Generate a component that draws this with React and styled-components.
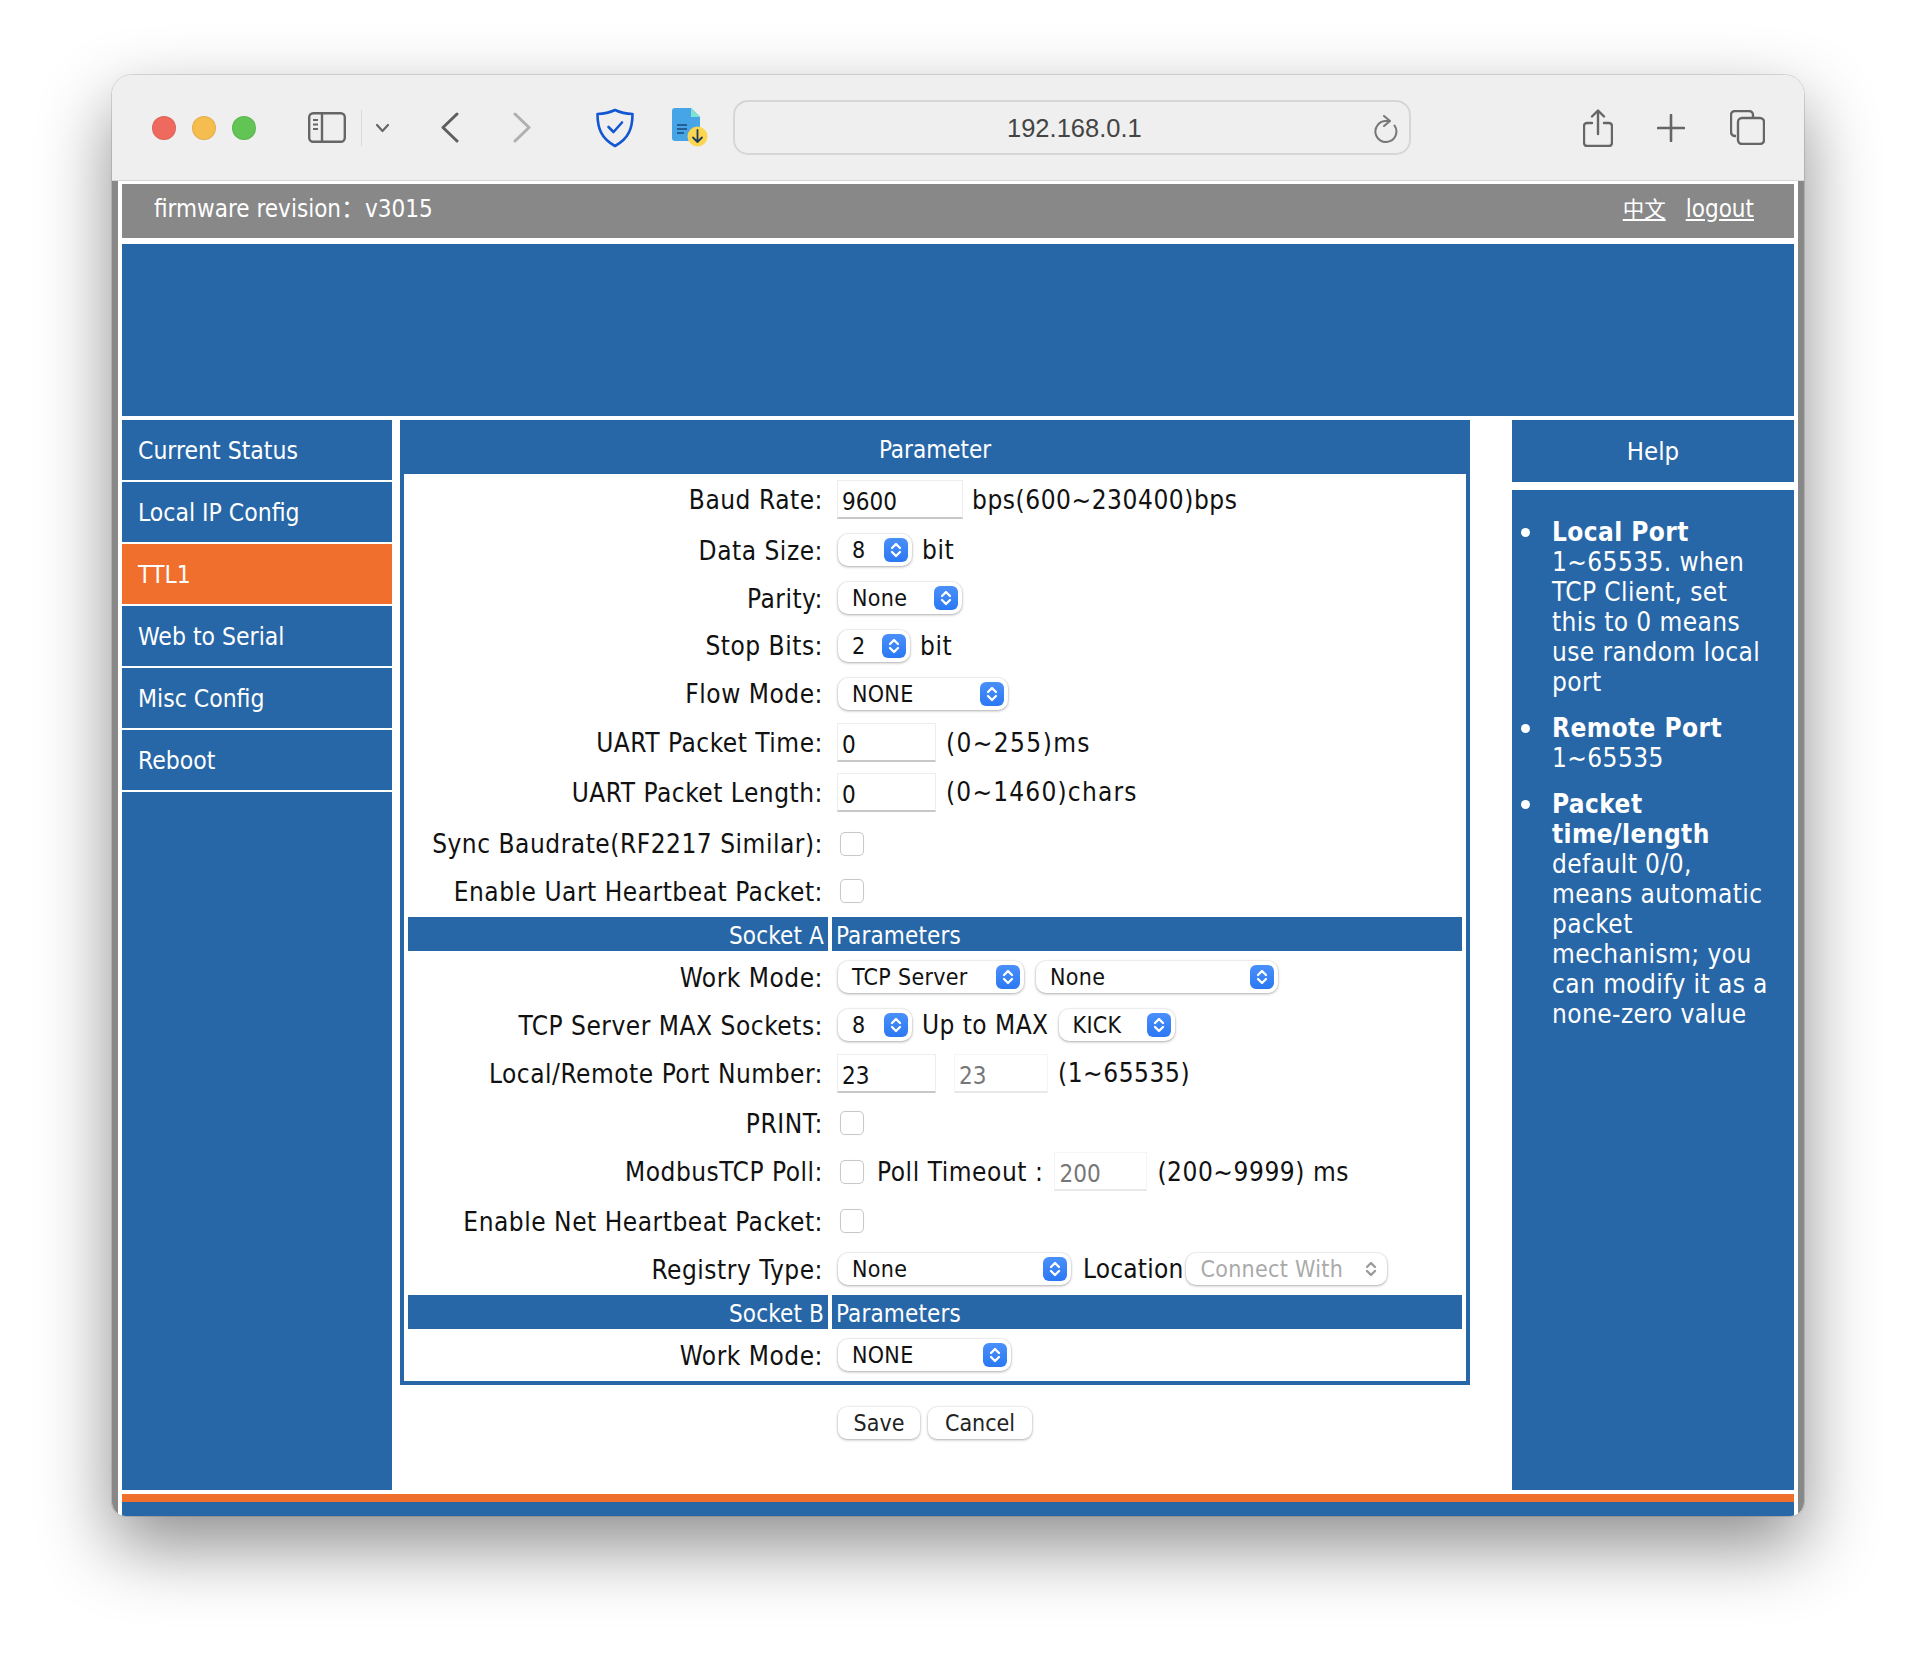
import React from 'react';
import styled, { createGlobalStyle } from 'styled-components';

const BLUE = '#2767a7';
const FONT = '"DejaVu Sans Condensed", "DejaVu Sans", "Noto Sans CJK SC", sans-serif';

const GlobalStyle = createGlobalStyle`
  html, body {
    margin: 0;
    padding: 0;
    background: #fff;
  }
  body {
    font-family: ${FONT};
    font-stretch: condensed;
  }
`;

const Page = styled.div`
  width: 1916px;
  height: 1664px;
  padding: 75px 112px 0;
  box-sizing: border-box;
  overflow: hidden;
`;

const Window = styled.div`
  height: 1441px;
  border-radius: 20px 20px 14px 14px;
  overflow: hidden;
  display: flex;
  flex-direction: column;
  box-shadow: 0 0 0 1px rgba(0, 0, 0, 0.12), 0 30px 72px rgba(0, 0, 0, 0.45);
`;

const Toolbar = styled.div`
  height: 106px;
  flex: none;
  background: #efefef;
  border-bottom: 1px solid #d6d6d6;
  box-sizing: border-box;
  display: flex;
  align-items: center;
  padding-left: 40px;
`;

const Lights = styled.div`
  display: flex;
  gap: 16px;
  margin-right: 52px;
`;

const Light = styled.span`
  width: 24px;
  height: 24px;
  border-radius: 50%;
  background: ${(p) => p.$color};
  box-shadow: inset 0 0 0 1px rgba(0, 0, 0, 0.08);
`;

const ToolIcon = styled.svg`
  flex: none;
  display: block;
  margin-left: ${(p) => p.$ml || 0}px;
`;

const Divider = styled.span`
  width: 1px;
  height: 36px;
  background: #d8d8d8;
  margin-left: 15px;
`;

const UrlBar = styled.div`
  width: 678px;
  height: 55px;
  margin-left: 25px;
  box-sizing: border-box;
  border: 2px solid #d6d6d6;
  border-radius: 15px;
  display: flex;
  align-items: center;
  padding: 2px 11px 0 272px;
  justify-content: space-between;
  font-family: "Liberation Sans", sans-serif;
  font-stretch: normal;
  font-size: 25.5px;
  color: #444;
`;

const Content = styled.div`
  flex: 1;
  min-height: 0;
  background: #fff;
  border-left: 6px solid #888;
  border-right: 6px solid #888;
  padding: 3px 4px 0;
  display: flex;
  flex-direction: column;
`;

const TopBar = styled.div`
  height: 54px;
  flex: none;
  box-sizing: border-box;
  background: #888;
  color: #fff;
  font-size: 24px;
  line-height: 30px;
  display: flex;
  align-items: center;
  justify-content: space-between;
  padding: 0 40px 4px 32px;
`;

const TopLinks = styled.div`
  display: flex;
  align-items: baseline;
  gap: 20px;
`;

const TopLink = styled.a`
  color: #fff;
  font-size: ${(p) => p.$size || 24}px;
  text-decoration: underline;
  cursor: pointer;
`;

const Banner = styled.div`
  height: 172px;
  flex: none;
  margin-top: 6px;
  background: ${BLUE};
`;

const Columns = styled.div`
  height: 1070px;
  flex: none;
  margin-top: 4px;
  display: flex;
`;

const Sidebar = styled.nav`
  width: 270px;
  flex: none;
  background: ${BLUE};
  display: flex;
  flex-direction: column;
`;

const NavItem = styled.a`
  height: 60px;
  flex: none;
  box-sizing: content-box;
  border-bottom: 2px solid #fff;
  background: ${(p) => (p.$active ? '#f06f2d' : BLUE)};
  color: #fff;
  font-size: 24.5px;
  display: flex;
  align-items: center;
  padding-left: 16px;
`;

const Main = styled.main`
  width: 1070px;
  flex: none;
  margin-left: 8px;
`;

const Panel = styled.div`
  height: 965px;
  box-sizing: border-box;
  border: 4px solid ${BLUE};
  border-top: 0;
  padding: 0 4px;
`;

const PanelTitle = styled.div`
  height: 54px;
  margin: 0 -8px;
  box-sizing: border-box;
  padding-top: 6px;
  background: ${BLUE};
  color: #fff;
  font-size: 24px;
  display: flex;
  align-items: center;
  justify-content: center;
`;

const Row = styled.div`
  height: ${(p) => p.$h}px;
  display: grid;
  grid-template-columns: 420px 630px;
  column-gap: 4px;
  align-items: center;
`;

const Label = styled.div`
  text-align: right;
  padding: 1px 5px 0 0;
  font-size: 26px;
  letter-spacing: 0.52px;
  color: #111;
  white-space: nowrap;
`;

const Controls = styled.div`
  display: flex;
  align-items: center;
  padding-left: 6px;
`;

const Band = styled.div`
  height: 34px;
  margin-top: ${(p) => p.$mt}px;
  display: grid;
  grid-template-columns: 420px 630px;
  column-gap: 4px;
`;

const BandCell = styled.div`
  background: ${BLUE};
  color: #fff;
  font-size: 24px;
  letter-spacing: 0.15px;
  display: flex;
  align-items: center;
  justify-content: ${(p) => (p.$right ? 'flex-end' : 'flex-start')};
  padding: 3px 4px 0;
`;

const TextInput = styled.input`
  width: ${(p) => p.$w}px;
  height: 39px;
  flex: none;
  box-sizing: border-box;
  margin: 0 0 0 ${(p) => (p.$ml === undefined ? -1 : p.$ml)}px;
  padding: 6px 0 0 4px;
  background: #fff;
  border: 1px solid ${(p) => (p.disabled ? '#f4f4f4' : '#eeeeee')};
  border-bottom: 2px solid ${(p) => (p.disabled ? '#e8e8e8' : '#c8c8c8')};
  border-radius: 0;
  outline: none;
  font-family: inherit;
  font-stretch: condensed;
  font-size: 24px;
  color: #111;
  &:disabled {
    color: #777;
    -webkit-text-fill-color: #777;
    opacity: 1;
  }
`;

const Note = styled.span`
  flex: none;
  margin-left: ${(p) => (p.$ml === undefined ? 10 : p.$ml)}px;
  font-size: 26px;
  letter-spacing: ${(p) => (p.$ls === undefined ? 0.55 : p.$ls)}px;
  color: #111;
  white-space: nowrap;
`;

const SelectBox = styled.div`
  width: ${(p) => p.$w}px;
  height: 32px;
  flex: none;
  box-sizing: border-box;
  margin-left: ${(p) => p.$ml || 0}px;
  padding: 0 4px 0 14px;
  background: #fff;
  border-radius: 10px;
  box-shadow: 0 0 0 1px rgba(0, 0, 0, 0.035), 0 1px 3px rgba(0, 0, 0, 0.3);
  display: flex;
  align-items: center;
  justify-content: space-between;
  font-size: 23px;
  letter-spacing: 0.3px;
  color: ${(p) => (p.$disabled ? '#aaa' : '#111')};
  white-space: nowrap;
`;

const Stepper = styled.span`
  width: 24px;
  height: 24px;
  flex: none;
  border-radius: 6px;
  background: ${(p) => (p.$disabled ? 'transparent' : 'linear-gradient(#4a90fb, #2b78f3)')};
  color: ${(p) => (p.$disabled ? '#9a9a9a' : '#fff')};
  display: flex;
  align-items: center;
  justify-content: center;
`;

const Check = styled.input.attrs({ type: 'checkbox' })`
  appearance: none;
  width: 24px;
  height: 24px;
  flex: none;
  margin: 0 0 0 2px;
  box-sizing: border-box;
  background: #fff;
  border: 1px solid #c8c8c8;
  border-radius: 5px;
  box-shadow: 0 0 1px rgba(0, 0, 0, 0.08);
`;

const Actions = styled.div`
  display: flex;
  gap: 8px;
  margin-top: 22px;
  padding-left: 438px;
`;

const ActionButton = styled.button`
  width: ${(p) => p.$w}px;
  height: 32px;
  padding: 0;
  background: #fff;
  border: none;
  border-radius: 9px;
  box-shadow: 0 0 0 1px rgba(0, 0, 0, 0.035), 0 1px 3px rgba(0, 0, 0, 0.3);
  font-family: inherit;
  font-stretch: condensed;
  font-size: 23px;
  color: #222;
`;

const Help = styled.aside`
  width: 282px;
  flex: none;
  margin-left: 42px;
  display: flex;
  flex-direction: column;
  gap: 8px;
`;

const HelpTitle = styled.div`
  height: 62px;
  flex: none;
  background: ${BLUE};
  color: #fff;
  font-size: 25.5px;
  display: flex;
  align-items: center;
  justify-content: center;
`;

const HelpBody = styled.ul`
  flex: 1;
  margin: 0;
  padding: 27px 24px 0 40px;
  list-style: none;
  background: ${BLUE};
  color: #fff;
  font-size: 26px;
  line-height: 30px;
  letter-spacing: 0.42px;
`;

const HelpItem = styled.li`
  position: relative;
  margin-bottom: 16px;
  &::before {
    content: '';
    position: absolute;
    left: -31px;
    top: 11px;
    width: 9px;
    height: 9px;
    border-radius: 50%;
    background: #fff;
  }
`;

const HelpTerm = styled.b`
  display: block;
`;

const Footer = styled.div`
  flex: 1;
  margin-top: 4px;
  background: ${BLUE};
  border-top: 8px solid #f06f2d;
`;

const Arrows = () => (
  <svg width="14" height="18" viewBox="0 0 14 18" fill="none" stroke="currentColor" strokeWidth="2.3" strokeLinecap="round" strokeLinejoin="round">
    <path d="M3 7l4-4 4 4" />
    <path d="M3 11l4 4 4-4" />
  </svg>
);

const Select = ({ w, ml, disabled, children }) => (
  <SelectBox $w={w} $ml={ml} $disabled={disabled}>
    <span>{children}</span>
    <Stepper $disabled={disabled}>
      <Arrows />
    </Stepper>
  </SelectBox>
);

const Field = ({ label, h, children }) => (
  <Row $h={h}>
    <Label>{label}</Label>
    <Controls>{children}</Controls>
  </Row>
);

const navItems = ['Current Status', 'Local IP Config', 'TTL1', 'Web to Serial', 'Misc Config', 'Reboot'];

export default function App() {
  return (
    <Page>
      <GlobalStyle />
      <Window>
        <Toolbar>
          <Lights>
            <Light $color="#ee6a5f" />
            <Light $color="#f5bd4f" />
            <Light $color="#61c454" />
          </Lights>
          <ToolIcon width="38" height="31" viewBox="0 0 38 31" fill="none" stroke="#666" strokeWidth="2.4">
            <rect x="1.2" y="1.2" width="35.6" height="28.6" rx="4" />
            <path d="M14 1.5v28" />
            <path d="M5 8h5M5 12.5h5M5 17h5" strokeWidth="2" />
          </ToolIcon>
          <Divider />
          <ToolIcon $ml={13} width="15" height="10" viewBox="0 0 15 10" fill="none" stroke="#666" strokeWidth="2.2" strokeLinecap="round" strokeLinejoin="round">
            <path d="M2 2l5.5 6L13 2" />
          </ToolIcon>
          <ToolIcon $ml={51} width="18" height="31" viewBox="0 0 18 31" fill="none" stroke="#5f5f5f" strokeWidth="3" strokeLinecap="round" strokeLinejoin="round">
            <path d="M16 2L2 15.5 16 29" />
          </ToolIcon>
          <ToolIcon $ml={54} width="18" height="31" viewBox="0 0 18 31" fill="none" stroke="#b0b0b0" strokeWidth="3" strokeLinecap="round" strokeLinejoin="round">
            <path d="M2 2l14 13.5L2 29" />
          </ToolIcon>
          <ToolIcon $ml={65} width="38" height="40" viewBox="0 0 38 40" fill="none" stroke="#1457d2" strokeWidth="2.6" strokeLinecap="round" strokeLinejoin="round">
            <path d="M19 2c5.500 2.600 11 3.800 17.500 4 0 14-3.600 24.500-17.500 32C5.100 30.500 1.500 20 1.500 6 8 5.800 13.500 4.600 19 2z" />
            <path d="M12.500 19l5 5 8.500-9.500" />
          </ToolIcon>
          <ToolIcon $ml={38} width="36" height="39" viewBox="0 0 36 39">
            <path d="M3 0h16l9 9v21a3 3 0 0 1-3 3H3a3 3 0 0 1-3-3V3a3 3 0 0 1 3-3z" fill="#45a5e6" />
            <path d="M19 0l9 9h-9z" fill="#7fe3d3" />
            <path d="M5 17h10M5 21h10M5 25h7" stroke="#1c4a78" strokeWidth="1.600" />
            <circle cx="25.500" cy="28.500" r="10" fill="#fbd64e" />
            <path d="M25.500 22v12M21 29.500l4.500 4.500 4.500-4.500" fill="none" stroke="#1f3a5f" strokeWidth="1.800" strokeLinecap="round" strokeLinejoin="round" />
          </ToolIcon>
          <UrlBar>
            <span>192.168.0.1</span>
            <svg width="24" height="28" viewBox="0 0 24 28" fill="none" stroke="#777" strokeWidth="2" strokeLinecap="round" strokeLinejoin="round">
              <path d="M15 6h-3A10.500 10.500 0 1 0 20.500 10.500" />
              <path d="M10 1l6 5-6 5" />
            </svg>
          </UrlBar>
          <ToolIcon $ml={172} width="30" height="38" viewBox="0 0 30 38" fill="none" stroke="#666" strokeWidth="2.400" strokeLinecap="round" strokeLinejoin="round">
            <path d="M9 14H4a3 3 0 0 0-3 3v17a3 3 0 0 0 3 3h22a3 3 0 0 0 3-3V17a3 3 0 0 0-3-3h-5" />
            <path d="M15 25V2M9 7.500L15 1.500l6 6" />
          </ToolIcon>
          <ToolIcon $ml={44} width="28" height="28" viewBox="0 0 28 28" fill="none" stroke="#666" strokeWidth="2.600" strokeLinecap="round">
            <path d="M14 1v26M1 14h26" />
          </ToolIcon>
          <ToolIcon $ml={45} width="35" height="35" viewBox="0 0 35 35" fill="none" stroke="#666" strokeWidth="2.400">
            <path d="M6 26H5a4 4 0 0 1-4-4V5a4 4 0 0 1 4-4h14a4 4 0 0 1 4 4v2" />
            <rect x="8" y="8" width="26" height="26" rx="4" />
          </ToolIcon>
        </Toolbar>
        <Content>
          <TopBar>
            <span>firmware revision：v3015</span>
            <TopLinks>
              <TopLink $size={21.5}>中文</TopLink>
              <TopLink>logout</TopLink>
            </TopLinks>
          </TopBar>
          <Banner />
          <Columns>
            <Sidebar>
              {navItems.map((item) => (
                <NavItem key={item} $active={item === 'TTL1'}>{item}</NavItem>
              ))}
            </Sidebar>
            <Main>
              <Panel>
                <PanelTitle>Parameter</PanelTitle>
                <Field label="Baud Rate:" h={51}>
                  <TextInput $w={126} defaultValue="9600" />
                  <Note $ml={9}>bps(600~230400)bps</Note>
                </Field>
                <Field label="Data Size:" h={50}>
                  <Select w={74}>8</Select>
                  <Note>bit</Note>
                </Field>
                <Field label="Parity:" h={46}>
                  <Select w={124}>None</Select>
                </Field>
                <Field label="Stop Bits:" h={49}>
                  <Select w={72}>2</Select>
                  <Note>bit</Note>
                </Field>
                <Field label="Flow Mode:" h={47}>
                  <Select w={170}>NONE</Select>
                </Field>
                <Field label="UART Packet Time:" h={51}>
                  <TextInput $w={99} defaultValue="0" />
                  <Note $ls={1.4}>(0~255)ms</Note>
                </Field>
                <Field label="UART Packet Length:" h={48}>
                  <TextInput $w={99} defaultValue="0" />
                  <Note $ls={1.2}>(0~1460)chars</Note>
                </Field>
                <Field label="Sync Baudrate(RF2217 Similar):" h={55}>
                  <Check />
                </Field>
                <Field label="Enable Uart Heartbeat Packet:" h={40}>
                  <Check />
                </Field>
                <Band $mt={6}>
                  <BandCell $right>Socket A</BandCell>
                  <BandCell>Parameters</BandCell>
                </Band>
                <Field label="Work Mode:" h={52}>
                  <Select w={186}>TCP Server</Select>
                  <Select w={242} ml={12}>None</Select>
                </Field>
                <Field label="TCP Server MAX Sockets:" h={44}>
                  <Select w={74}>8</Select>
                  <Note $ml={10} $ls={0.45}>Up to MAX</Note>
                  <Select w={116} ml={10}>KICK</Select>
                </Field>
                <Field label="Local/Remote Port Number:" h={52}>
                  <TextInput $w={99} defaultValue="23" />
                  <TextInput $w={94} $ml={18} defaultValue="23" disabled />
                  <Note>(1~65535)</Note>
                </Field>
                <Field label="PRINT:" h={48}>
                  <Check />
                </Field>
                <Field label="ModbusTCP Poll:" h={49}>
                  <Check />
                  <Note $ml={13}>Poll Timeout :</Note>
                  <TextInput $w={93} $ml={11} defaultValue="200" disabled />
                  <Note>(200~9999) ms</Note>
                </Field>
                <Field label="Enable Net Heartbeat Packet:" h={50}>
                  <Check />
                </Field>
                <Field label="Registry Type:" h={46}>
                  <Select w={233}>None</Select>
                  <Note $ml={12} $ls={0.2}>Location</Note>
                  <Select w={201} ml={3} disabled>Connect With</Select>
                </Field>
                <Band $mt={3}>
                  <BandCell $right>Socket B</BandCell>
                  <BandCell>Parameters</BandCell>
                </Band>
                <Field label="Work Mode:" h={52}>
                  <Select w={173}>NONE</Select>
                </Field>
              </Panel>
              <Actions>
                <ActionButton $w={82}>Save</ActionButton>
                <ActionButton $w={104}>Cancel</ActionButton>
              </Actions>
            </Main>
            <Help>
              <HelpTitle>Help</HelpTitle>
              <HelpBody>
                <HelpItem>
                  <HelpTerm>Local Port</HelpTerm>
                  1~65535. when TCP Client, set this to 0 means use random local port
                </HelpItem>
                <HelpItem>
                  <HelpTerm>Remote Port</HelpTerm>
                  1~65535
                </HelpItem>
                <HelpItem>
                  <HelpTerm>Packet time/length</HelpTerm>
                  default 0/0, means automatic packet mechanism; you can modify it as a none-zero value
                </HelpItem>
              </HelpBody>
            </Help>
          </Columns>
          <Footer />
        </Content>
      </Window>
    </Page>
  );
}
